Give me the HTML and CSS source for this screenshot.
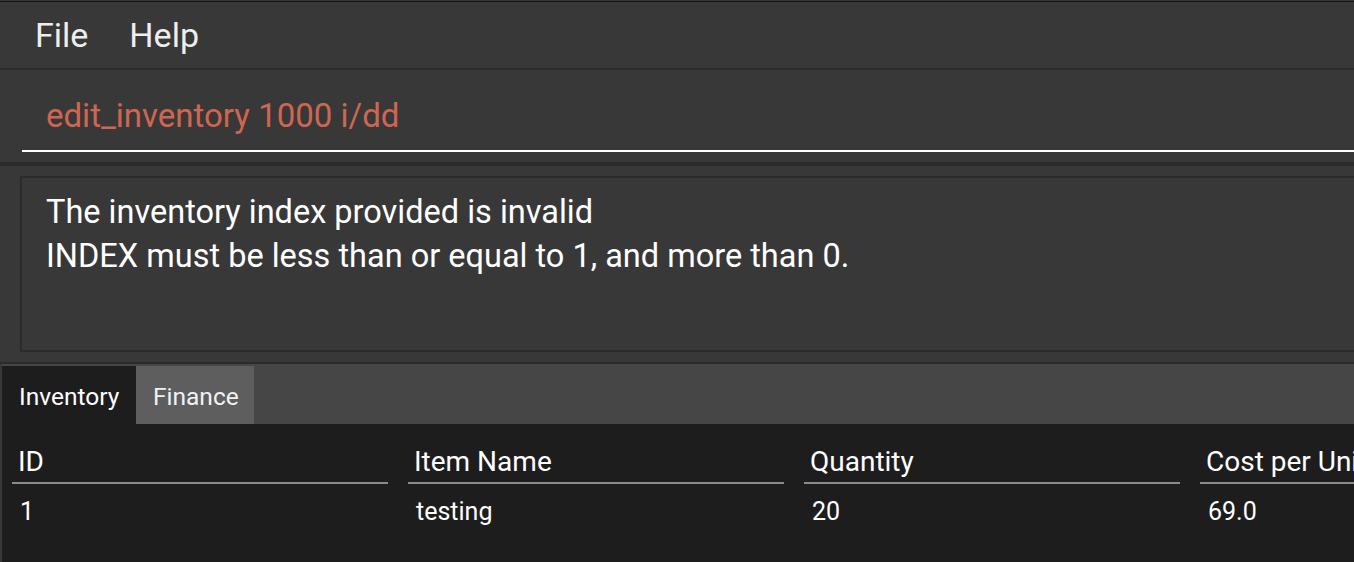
FILE: index.html
```html
<!DOCTYPE html>
<html>
<head>
<meta charset="utf-8">
<link rel="stylesheet" href="styles.css">
</head>
<body>
<div class="app">
  <div class="menubar">
    <span class="menu-item">File</span>
    <span class="menu-item">Help</span>
  </div>
  <div class="command-section">
    <div class="command-field">edit_inventory 1000 i/dd</div>
  </div>
  <div class="result-section">
    <div class="result-box">
      <div class="result-line">The inventory index provided is invalid</div>
      <div class="result-line">INDEX must be less than or equal to 1, and more than 0.</div>
    </div>
  </div>
  <div class="tab-pane">
    <div class="tab-header">
      <div class="tab tab-selected">Inventory</div>
      <div class="tab tab-other">Finance</div>
    </div>
    <div class="tab-content">
      <div class="table">
        <div class="th">ID</div>
        <div class="th">Item Name</div>
        <div class="th">Quantity</div>
        <div class="th">Cost per Unit</div>
        <div class="td">1</div>
        <div class="td">testing</div>
        <div class="td">20</div>
        <div class="td">69.0</div>
      </div>
    </div>
  </div>
</div>
</body>
</html>
```
FILE: styles.css
```css
html, body {
  margin: 0;
  padding: 0;
  background: #383838;
  overflow: hidden;
}

.app {
  width: 1354px;
  height: 562px;
  overflow: hidden;
  font-family: Roboto, "Liberation Sans", sans-serif;
  color: #ffffff;
  padding-top: 1px;
  box-sizing: border-box;
}

.menubar {
  border-top: 1px solid #141414;
  height: 66px;
  line-height: 66px;
  display: flex;
  gap: 41px;
  padding-left: 35px;
  font-size: 34px;
  color: #eeeeee;
  border-bottom: 2px solid #2b2b2b;
}

.command-section {
  padding: 10px 0 10px 22px;
  border-bottom: 4px solid #2b2b2b;
}

.command-field {
  padding-top: 1px;
  height: 69px;
  line-height: 69px;
  padding-left: 24px;
  font-size: 33px;
  color: #d06651;
  border-bottom: 2px solid #ffffff;
  white-space: nowrap;
}

.result-section {
  padding: 10px 0 10px 20px;
  border-bottom: 2px solid #2b2b2b;
}

.result-box {
  box-sizing: border-box;
  height: 176px;
  margin-right: -10px;
  border: 2px solid #2b2b2b;
  padding: 12px 0 0 24px;
  font-size: 32.5px;
  line-height: 44px;
  white-space: nowrap;
}

.tab-pane {
  padding-left: 2px;
}

.tab-header {
  background: #464646;
  height: 60px;
  display: flex;
  align-items: flex-end;
}

.tab {
  box-sizing: border-box;
  height: 58px;
  padding: 3px 0 0 17px;
  line-height: 55px;
  font-size: 24.5px;
  white-space: nowrap;
}

.tab-selected {
  width: 134px;
  background: #1d1d1d;
  color: #ffffff;
}

.tab-other {
  width: 118px;
  background: #5e5e5e;
  color: #f2f2f2;
}

.tab-content {
  box-sizing: border-box;
  background: #1d1d1d;
  height: 138px;
  overflow: hidden;
  padding: 18px 0 0 10px;
}

.table {
  display: grid;
  grid-template-columns: repeat(4, 376px);
  column-gap: 20px;
}

.th {
  height: 40px;
  line-height: 40px;
  padding-left: 6px;
  font-size: 28px;
  border-bottom: 2px solid #8a8a8a;
  white-space: nowrap;
}

.td {
  padding: 7px 0 0 8px;
  line-height: 41px;
  font-size: 25px;
  white-space: nowrap;
}
```
